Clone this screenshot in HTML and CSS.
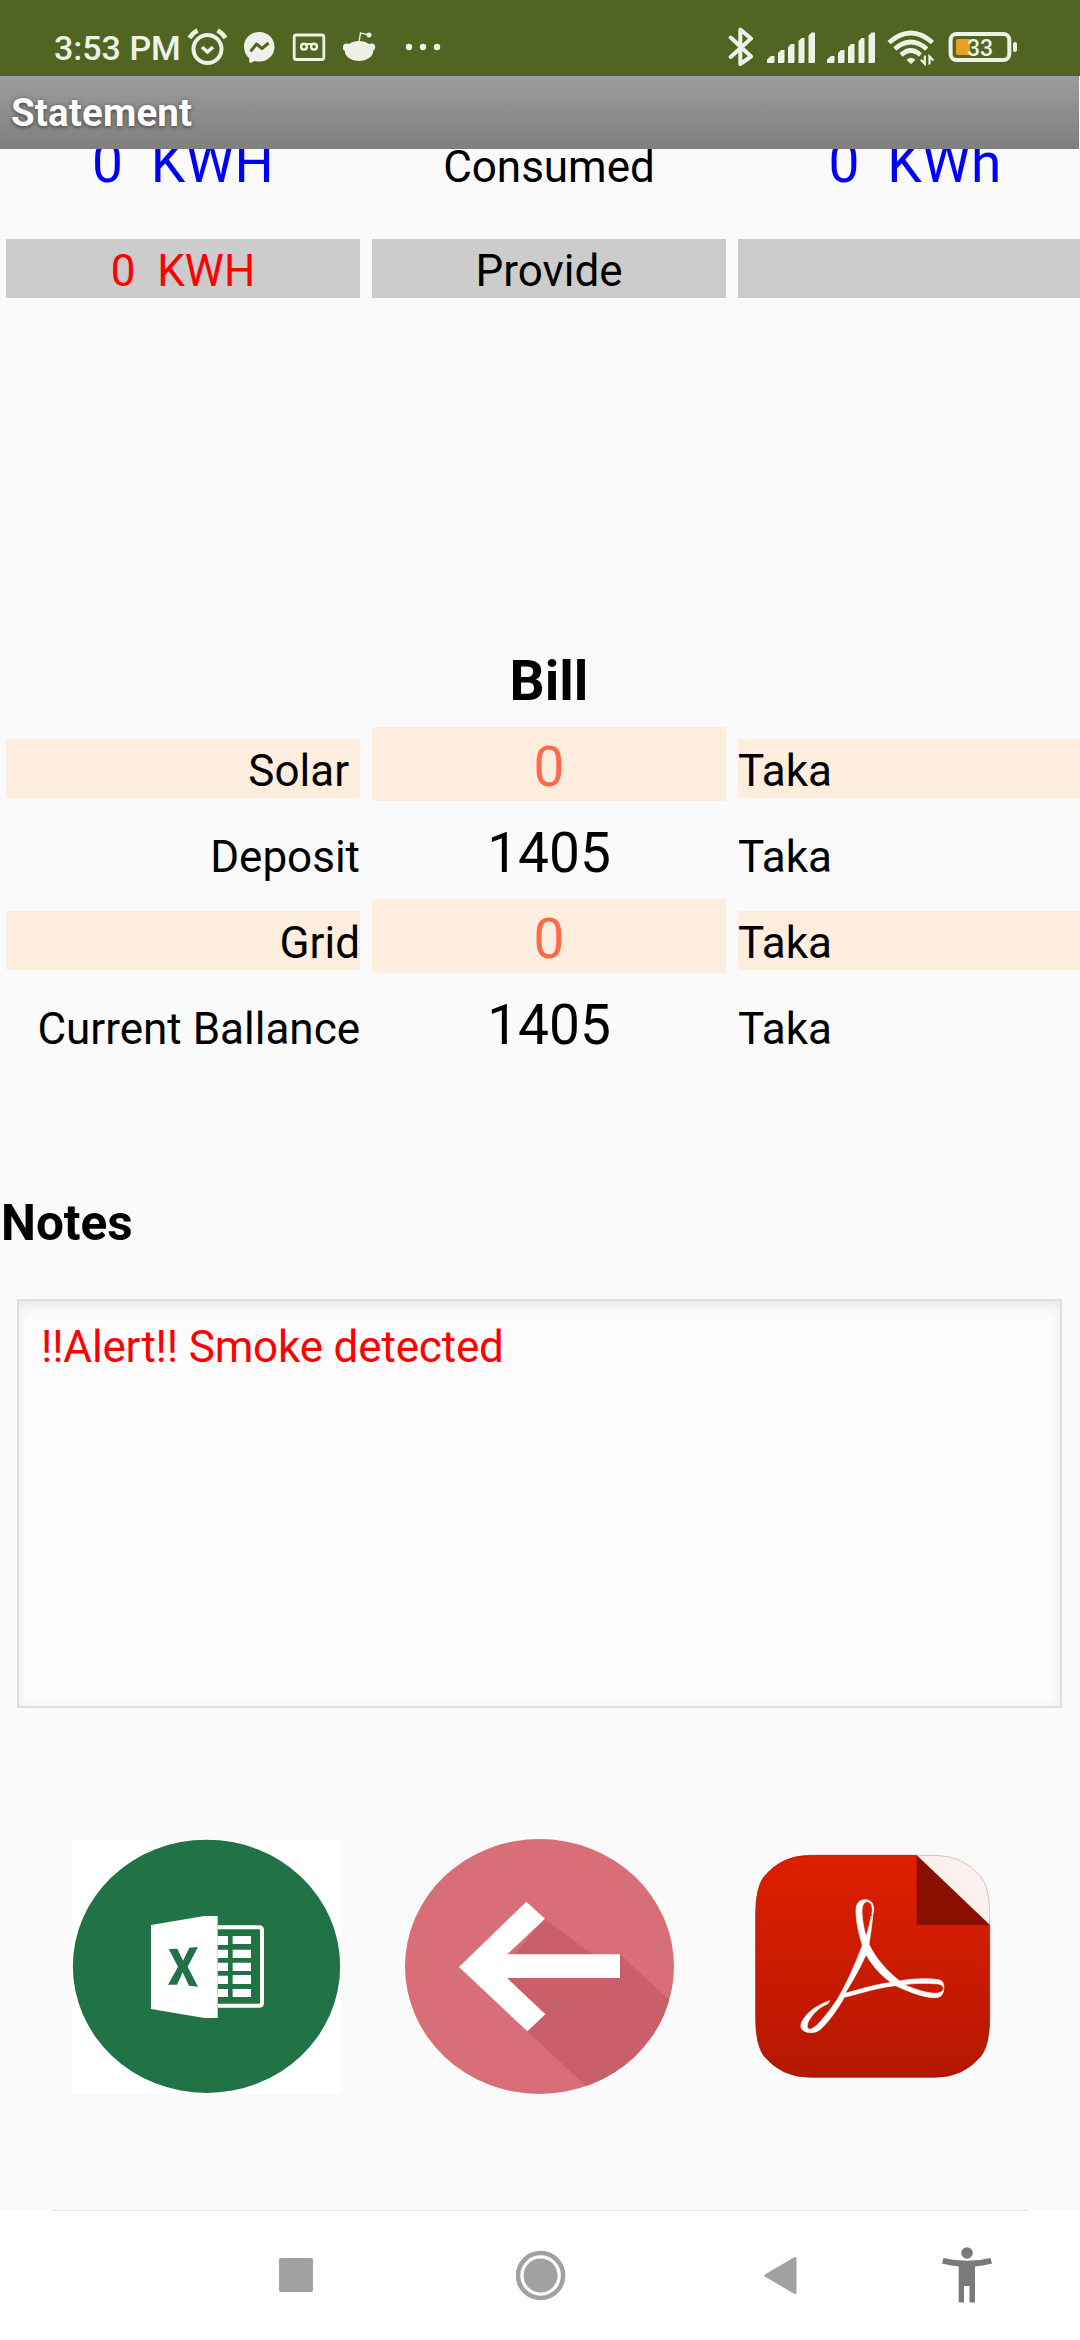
FILE: index.html
```html
<!DOCTYPE html>
<html lang="en">
<head>
<meta charset="utf-8">
<title>Statement</title>
<link rel="stylesheet" href="styles.css">
</head>
<body>
<header class="status">
  <span class="clock">3:53 PM</span>
  <svg class="i-alarm" viewBox="187 0 41 76" fill="none" stroke="#eff1e7" stroke-width="4">
    <circle cx="207.5" cy="49" r="14"/>
    <path d="M202 47l5.5 5 5.500-5" stroke-width="3.500"/>
    <path d="M189.500 38q3-5 8-7.500M225.500 38q-3-5-8-7.500" stroke-width="4.500"/>
  </svg>
  <svg class="i-messenger" viewBox="244 0 31 76">
    <path fill="#eff1e7" d="M259.300 32c8.700 0 15.200 6.400 15.200 14.800s-6.500 14.800-15.200 14.800c-1.600 0-3-.2-4.400-.6l-4 1.700c-1 .3-1.600-.3-1.600-1.100l-.1-3.300c-3.200-2.700-5.200-6.900-5.200-11.500 0-8.400 6.600-14.800 15.300-14.800z"/>
    <path fill="none" stroke="#506522" stroke-width="3" stroke-linejoin="round" d="M250.500 51.500l6-7.500 5.500 4.500 6.500-5.500"/>
  </svg>
  <svg class="i-voicemail" viewBox="292 0 34 76" fill="none" stroke="#eff1e7">
    <rect x="294.200" y="35" width="29.600" height="24.500" rx="2" stroke-width="2.800"/>
    <circle cx="304" cy="46.700" r="2.900" stroke-width="2.400"/><circle cx="314" cy="46.700" r="2.900" stroke-width="2.400"/>
    <path d="M303 44h12" stroke-width="2"/>
  </svg>
  <svg class="i-reddit" viewBox="343 0 33 76" fill="#eff1e7">
    <ellipse cx="359" cy="51" rx="14.200" ry="10"/>
    <circle cx="346.600" cy="47.300" r="3.700"/><circle cx="371.500" cy="47.300" r="3.700"/>
    <circle cx="369" cy="35" r="2.500"/>
    <path d="M359 42l1.500-9 8 1.600" fill="none" stroke="#eff1e7" stroke-width="1.400"/>
  </svg>
  <svg class="i-more" viewBox="404 0 38 76" fill="#eff1e7">
    <circle cx="409" cy="47" r="3.200"/><circle cx="423" cy="47" r="3.200"/><circle cx="437" cy="47" r="3.200"/>
  </svg>
  <svg class="i-bluetooth" viewBox="728 0 27 76" fill="none" stroke="#eff1e7" stroke-width="4" stroke-linejoin="round" stroke-linecap="round">
    <path d="M730.700 37.500L751 56.500 740.300 64V29.500L751 38.500 730.700 57"/>
  </svg>
  <svg class="i-signal" viewBox="767 0 49 76" fill="#eff1e7">
    <path id="bars" d="M767 63v-3.500l4-3.500h3.500v5.500q0 1.500-1.500 1.500zM778 63V53l3-3h3.500v11.500q0 1.500-1.500 1.500zM788 63V47l3-3h3.500v17.500q0 1.500-1.500 1.500zM798.500 63V41l3-3h3v23.500q0 1.500-1.500 1.500zM808.500 63V35.500l3-3h3.500v29q0 1.500-1.500 1.500z"/>
  </svg>
  <svg class="i-signal i-signal-2" viewBox="767 0 49 76" fill="#eff1e7"><use href="#bars"/></svg>
  <svg class="i-wifi" viewBox="887 0 48 76" fill="none" stroke="#eff1e7" stroke-width="4.600">
    <path d="M889 42.500q22-19 43.500 0M894.800 49q16-14 32 0M901 55q9.800-9 19.500 0"/>
    <path d="M906.500 60q4.500-4.500 9 0l-4.500 4z" fill="#eff1e7" stroke="none"/>
    <path d="M924.800 55.500v8.300l-4-4M929.500 64.500v-8l4 4" stroke-width="2.200"/>
  </svg>
  <svg class="i-battery" viewBox="948 0 71 76">
    <rect x="950.600" y="34" width="58.700" height="26" rx="6" fill="none" stroke="#eff1e7" stroke-width="4"/>
    <path d="M958 39h12v16h-12q-2 0-2-2V41q0-2 2-2z" fill="#e8a024"/>
    <rect x="1013" y="42" width="4" height="10" rx="2" fill="#eff1e7"/>
    <text class="charge" x="967" y="56">33</text>
  </svg>
</header>
<div class="titlebar"><h1>Statement</h1></div>
<main>
  <section class="table">
    <div class="row row-usage">
      <div class="cell big center blue">0  KWH</div>
      <div class="cell center">Consumed</div>
      <div class="cell big center blue">0  KWh</div>
    </div>
    <div class="row row-provide">
      <div class="cell center grey red">0  KWH</div>
      <div class="cell center grey">Provide</div>
      <div class="cell grey"></div>
    </div>
    <div class="row"><h2 class="cell big center heading">Bill</h2></div>
    <div class="row">
      <div class="cell right peach">Solar </div>
      <div class="cell big center peach coral">0</div>
      <div class="cell peach">Taka</div>
    </div>
    <div class="row">
      <div class="cell right">Deposit</div>
      <div class="cell big center">1405</div>
      <div class="cell">Taka</div>
    </div>
    <div class="row">
      <div class="cell right peach">Grid</div>
      <div class="cell big center peach coral">0</div>
      <div class="cell peach">Taka</div>
    </div>
    <div class="row">
      <div class="cell right">Current Ballance</div>
      <div class="cell big center">1405</div>
      <div class="cell">Taka</div>
    </div>
  </section>
  <h2 class="notes-title">Notes</h2>
  <div class="notes">!!Alert!! Smoke detected</div>
  <div class="actions">
    <svg viewBox="66 57 807 765" preserveAspectRatio="none">
      <path fill="#fff" d="M66 57h807v765H66z"/>
      <ellipse cx="469.500" cy="439" rx="401" ry="380" fill="#217346"/>
      <path fill="#fff" d="M303 315l160-27h40v306h-40l-160-27z"/>
      <path fill="none" stroke="#fff" stroke-width="12" d="M503 322h124q9 0 9 9v217q0 9-9 9H503"/>
      <path fill="#fff" d="M503 348h31v27h-31zM548 348h55v24h-55zM503 389h31v25h-31zM548 389h55v25h-55zM503 428h31v25h-31zM548 428h55v25h-55zM503 467h31v25h-31zM548 465h55v27h-55zM503 507h31v24h-31zM548 507h55v24h-55z"/>
      <path fill="#217346" d="M356 387l26-1 17 36 19-39 26-2-31 59 31 60-27-3-19-40-17 37h-27l30-54z"/>
    </svg>
    <svg viewBox="45 57 807 765" preserveAspectRatio="none">
      <clipPath id="disc"><ellipse cx="448.500" cy="439.500" rx="403.500" ry="382.500"/></clipPath>
      <g clip-path="url(#disc)">
        <path fill="#d86f78" d="M45 57h807v765H45z"/>
        <path fill="#c95f68" d="M464 296L607 403h83L900 597v300H694L412 634 340 440z"/>
      </g>
      <path fill="#fff" d="M207 441l202-196 56 51-114 107h339v71H351l115 109-54 51z"/>
    </svg>
    <svg viewBox="24 57 807 765" preserveAspectRatio="none">
      <defs>
        <linearGradient id="red" x1="0" y1="0" x2="0" y2="1"><stop offset="0" stop-color="#df1f00"/><stop offset="1" stop-color="#b51700"/></linearGradient>
      </defs>
      <path fill="url(#red)" stroke="#8e1a0c" stroke-width="2" d="M241 106H560L779 314V595Q779 675 753 708Q700 772 615 772H241Q155 772 102 708Q77 675 77 595V283Q77 203 102 170Q155 106 241 106z"/>
      <path fill="#fcf0ef" stroke="#b9afae" stroke-width="2" d="M560 106h55Q700 106 753 170Q779 203 779 283v31z"/>
      <path fill="#8b0f00" d="M560 106v209h219z"/>
      <path fill="#fff" stroke="#fff" stroke-width="2" fill-rule="evenodd" d="M397 376C386 340 378 305 378 272C378 250 388 239 405 239C423 239 432 251 431 271L427 291C425 285 426 280 427 271C427 252 420 245 410 245C400 246 396 259 396 278C397 303 402 328 408 349C415 330 420 310 423 288L428 292C425 320 421 347 417 373C436 413 468 451 509 483C550 475 600 474 629 480C640 483 643 495 641 509C639 524 633 532 616 533C580 533 533 514 497 497C450 501 400 517 343 532C318 577 289 613 269 630C253 641 230 640 218 630C206 618 215 601 235 579C252 563 275 550 299 542L294 551C268 562 248 580 235 605C228 621 233 630 243 627C259 622 279 596 301 568L322 538C350 490 376 434 397 376zM408 404C390 446 366 486 345 520C390 508 438 493 483 487C453 467 427 437 408 404zM522 494C555 508 590 519 615 520C634 519 642 512 640 503C637 494 629 491 613 491C582 489 548 490 522 494z"/>
    </svg>
  </div>
</main>
<nav>
  <svg class="n-recent" viewBox="278 2210 36 130"><rect x="279" y="2258" width="34" height="34" rx="2" fill="#a1a1a1"/></svg>
  <svg class="n-home" viewBox="515 2210 52 130"><circle cx="540.600" cy="2275.500" r="22.500" fill="none" stroke="#a1a1a1" stroke-width="4.500"/><circle cx="540.600" cy="2275.500" r="17" fill="#a1a1a1"/></svg>
  <svg class="n-back" viewBox="764 2210 34 130"><path d="M766 2275.500L795 2258.500V2292.500z" fill="#a1a1a1" stroke="#a1a1a1" stroke-width="3" stroke-linejoin="round"/></svg>
  <svg class="n-access" viewBox="941 2210 52 130" fill="#7a7a7a"><circle cx="967" cy="2253" r="5.800"/><path d="M943.500 2258q23.500 5.500 47 0l1.500 5.500q-7 2-17 3V2302.500h-5.500V2286h-5.500v16.500h-5.300V2266.500q-9-1-16.700-3z"/></svg>
</nav>
</body>
</html>
```

FILE: styles.css
```css
* { box-sizing: border-box; }
body {
  margin: 0;
  width: 1080px;
  height: 2340px;
  display: flex;
  flex-direction: column;
  overflow: hidden;
  background: #fafafa;
  color: #000;
  font-family: Roboto, sans-serif;
}
svg { display: block; flex: none; }
h1, h2 { margin: 0; }

.status {
  height: 76px;
  flex: none;
  display: flex;
  background: #506522;
  color: #eff1e7;
}
.status svg { height: 76px; }
.clock {
  width: 133px;
  margin-left: 54px;
  padding-top: 28px;
  font-size: 34px;
  line-height: 40px;
  font-weight: 500;
  white-space: nowrap;
}
.i-alarm { width: 41px; }
.i-messenger { width: 31px; margin-left: 16px; }
.i-voicemail { width: 34px; margin-left: 17px; }
.i-reddit { width: 33px; margin-left: 17px; }
.i-more { width: 38px; margin-left: 28px; }
.i-bluetooth { width: 27px; margin-left: auto; }
.i-signal { width: 49px; margin-left: 12px; }
.i-signal-2 { margin-left: 11px; }
.i-wifi { width: 48px; margin-left: 11px; }
.i-battery { width: 71px; margin: 0 61px 0 13px; }
.charge { font-size: 23px; font-weight: 500; fill: #eff1e7; }

.titlebar {
  width: 1079px;
  height: 73px;
  flex: none;
  padding: 14px 0 0 11px;
  background: linear-gradient(#9c9c9c, #7f7f7f);
}
.titlebar h1 {
  font-size: 38.5px;
  line-height: 45px;
  letter-spacing: .15px;
  color: #fff;
  text-shadow: 0 1px 4px rgba(0, 0, 0, .6);
}

main {
  height: 2061px;
  flex: none;
  overflow: hidden;
}
.table {
  display: flex;
  flex-direction: column;
  gap: 12px;
  margin-top: -26px;
}
.row {
  display: grid;
  grid-template-columns: repeat(3, 354px);
  gap: 12px;
  padding-left: 6px;
}
.row-usage { height: 74px; }
.row-provide { margin: 30px 0 331px; }
.cell {
  align-self: end;
  height: 59px;
  margin-bottom: 3px;
  padding-top: 5px;
  font-size: 44px;
  line-height: 54px;
  white-space: pre;
}
.row-provide .cell { margin-bottom: 0; }
.row .big {
  height: 74px;
  margin-bottom: 0;
  padding-top: 6px;
  font-size: 55px;
  line-height: 68px;
}
.center { text-align: center; }
.right { text-align: right; }
.heading { grid-column: 2; }
.blue { color: #00f; letter-spacing: .2px; }
.red { color: #f00; }
.coral { color: #ff6b4a; }
.grey { background: #ccc; }
.peach { background: #ffeddd; }

.notes-title {
  margin-top: 134px;
  font-size: 49.5px;
  line-height: 60px;
  padding-left: 1px;
}
.notes {
  width: 1045px;
  height: 409px;
  margin: 46px 0 0 17px;
  padding: 19px 22px;
  border: 2px solid #dedede;
  background: #fcfcfc;
  box-shadow: inset 0 8px 14px -4px #e9e9e9, inset 0 0 10px #f1f1f1;
  color: #f00;
  font-size: 44px;
  line-height: 54px;
  letter-spacing: -.17px;
}
.actions {
  display: flex;
  gap: 64px;
  padding: 131px 0 0 72px;
}
.actions svg { width: 269px; height: 255px; }

nav {
  height: 130px;
  flex: none;
  display: flex;
  background: linear-gradient(#e4e4e4, #e4e4e4) 52px 0 / 976px 1px no-repeat #fff;
}
nav svg { height: 130px; }
.n-recent { width: 36px; margin-left: 278px; }
.n-home { width: 52px; margin-left: 201px; }
.n-back { width: 34px; margin-left: 197px; }
.n-access { width: 52px; margin-left: 143px; }
```
